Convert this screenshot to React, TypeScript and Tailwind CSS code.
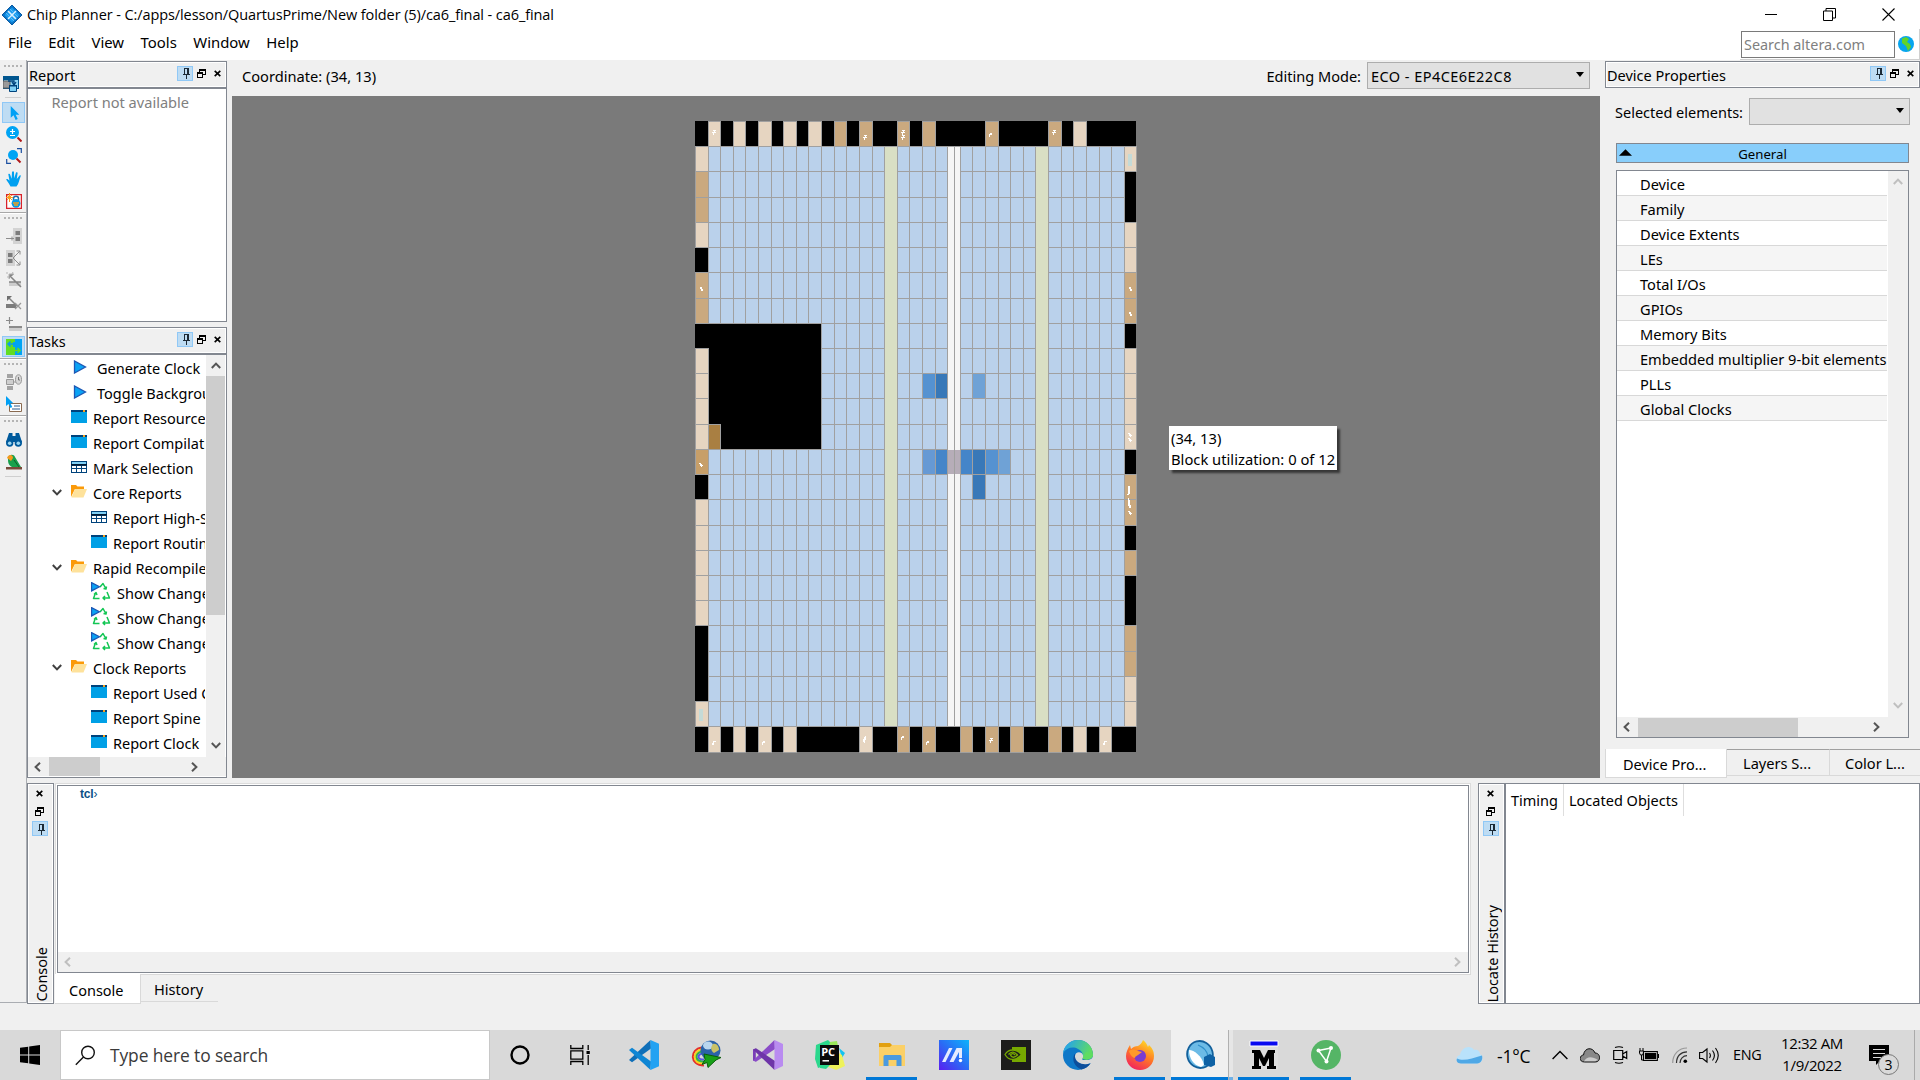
import React from "react";

type P = { children?: React.ReactNode; className?: string };

const XS = [695, 708, 720, 733, 745, 758, 771, 783, 796, 808, 821, 834, 846, 859, 872, 884, 897, 909, 922, 935, 947, 960, 972, 985, 998, 1010, 1023, 1035, 1048, 1061, 1073, 1086, 1099, 1111, 1124, 1136];
const YS = [121, 146, 171, 197, 222, 247, 272, 298, 323, 348, 373, 398, 424, 449, 474, 499, 525, 550, 575, 600, 625, 651, 676, 701, 726, 752];

const LINE = "#a0a0a0";
const L = "#e6d5c1";
const T = "#caa97f";
const BLUE = "#bad1eb";
const GREEN = "#d9dfc4";

type Cell = [number, number, string];

const pads: Cell[] = [
  ...[1, 3, 5, 7, 9, 30].map((c): Cell => [c, 0, L]),
  ...[11, 13, 16, 18, 23, 28].map((c): Cell => [c, 0, T]),
  ...[1, 3, 5, 7, 13, 30, 32].map((c): Cell => [c, 24, L]),
  ...[16, 18, 21, 23, 25, 28].map((c): Cell => [c, 24, T]),
  ...[1, 4, 9, 10, 11, 12, 15, 16, 17, 18, 19, 23].map((r): Cell => [0, r, L]),
  ...[2, 3, 6, 7].map((r): Cell => [0, r, T]),
  [0, 13, "#c79f69"],
  ...[1, 4, 5, 9, 10, 11, 12, 22, 23].map((r): Cell => [34, r, L]),
  ...[6, 7, 14, 15, 17, 20, 21].map((r): Cell => [34, r, T]),
  [1, 12, "#a97f42"],
];

const used: Cell[] = [
  [18, 10, "#5592d1"], [19, 10, "#3878b8"], [22, 10, "#6fa2d6"],
  [18, 13, "#6699d4"], [19, 13, "#4485c9"], [21, 13, "#4485c9"],
  [22, 13, "#3878b8"], [23, 13, "#5592d1"], [24, 13, "#6fa2d6"], [22, 14, "#3878b8"],
];

const SHAPES: Record<string, string[]> = {
  a: [".###", "..#.", "####", ".#..", ".#.."],
  b: [".##", "###", "#..", "#.."],
  c: ["##.", "##.", ".##", ".##"],
  d: ["##..", ".##.", ".###", "..#."],
  e: ["..#", ".##", ".##", "###", "##.", "##.", ".#."],
  f: [".###", ".#..", "##..", "##.."],
  j: [".##", ".##", ".##", ".##", ".##", ".##", ".##", ".##", "##."],
  k: [".#..", ".#..", ".##.", ".##.", ".##.", ".##.", ".##.", ".###", "..##", "..##"],
};

const marks: [string, number, number][] = [
  ["a", 712, 130], ["a", 863, 135], ["a", 901, 130], ["a", 901, 135], ["b", 989, 133], ["a", 1052, 130],
  ["c", 700, 287], ["c", 1129, 287], ["c", 1129, 312], ["d", 1128, 433], ["d", 1128, 438], ["d", 699, 463],
  ["j", 1127, 486], ["k", 1127, 498], ["d", 1128, 511],
  ["f", 712, 741], ["b", 762, 741], ["e", 863, 736], ["b", 901, 736], ["b", 926, 741], ["a", 989, 738], ["f", 1103, 741],
];

const Box = ({ cell: [c, r, fill] }: { cell: Cell }) => (
  <rect x={XS[c] + 0.5} y={YS[r] + 0.5} width={XS[c + 1] - XS[c]} height={YS[r + 1] - YS[r]} fill={fill} stroke={LINE} />
);

function ChipMap() {
  const fabric: Cell[] = [];
  for (let r = 1; r < 24; r++)
    for (let c = 1; c < 34; c++) {
      if (c === 15 || c === 20 || c === 27) continue;
      if (r >= 8 && r <= 12 && c < 10) continue;
      fabric.push([c, r, BLUE]);
    }
  return (
    <svg className="block h-[632px] w-[442px]" viewBox="695 121 442 632" shapeRendering="crispEdges">
      <rect x={695} y={121} width={441} height={631} fill="#000" />
      {fabric.map((c, i) => <Box key={i} cell={c} />)}
      {[15, 27].map((c) => (
        <rect key={c} x={XS[c] + 0.5} y={146.5} width={XS[c + 1] - XS[c]} height={580} fill={GREEN} stroke={LINE} />
      ))}
      <rect x={947.5} y={146.5} width={13} height={580} fill="#f5f5f5" stroke={LINE} />
      <rect x={948} y={450} width={12} height={24} fill="#b6adb8" />
      <rect x={954} y={147} width={1} height={579} fill={LINE} />
      {used.map((c, i) => <Box key={i} cell={c} />)}
      {pads.map((c, i) => <Box key={i} cell={c} />)}
      <rect x={1128} y={154} width={4} height={12} fill="#c4dad7" />
      <rect x={699} y={709} width={4} height={12} fill="#c4dad7" />
      {marks.map(([s, x, y], i) =>
        SHAPES[s].map((row, dy) =>
          [...row].map((ch, dx) => (ch === "#" ? <rect key={`${i}-${dy}-${dx}`} x={x + dx} y={y + dy} width={1} height={1} fill="#fff" /> : null))
        )
      )}
    </svg>
  );
}

/* ---------- small glyphs ---------- */
const Svg = ({ children, className = "size-4", vb = "0 0 16 16" }: P & { vb?: string }) => (
  <svg className={`block shrink-0 ${className}`} viewBox={vb} fill="none">{children}</svg>
);

const Pin = () => (
  <span className="flex h-[15px] w-4 items-center justify-center border border-[#90c8f6] bg-[#bedcf3]">
    <Svg className="ml-[3px] mt-px h-[11px] w-[9px]" vb="0 0 9 11">
      <path d="M2.5 .5h4v6h-4zM5.5 1v6M1 6.5h7M4.5 7v4" stroke="#1c2a36" shapeRendering="crispEdges" />
    </Svg>
  </span>
);
const Restore = () => (
  <Svg className="h-[9px] w-[9px]" vb="0 0 9 9">
    <path d="M2.5 3V.5h6v5H6M2.5 1h6M.5 3.5h5v5h-5zM.5 4h5" stroke="#000" shapeRendering="crispEdges" />
  </Svg>
);
const Cross = () => (
  <Svg className="h-[7px] w-[7px]" vb="0 0 7 7">
    <path d="M.7.8 6.3 6.2M6.3.8.7 6.2" stroke="#000" strokeWidth="1.6" />
  </Svg>
);
const DockButtons = () => (
  <div className="mb-[3px] flex items-center">
    <Pin />
    <span className="ml-1"><Restore /></span>
    <span className="ml-2"><Cross /></span>
  </div>
);
const DockTitle = ({ children }: P) => (
  <div className="flex h-[27px] shrink-0 items-center justify-between border border-[#828790] bg-[#f0f0f0] pl-px pr-[5px] shadow-[inset_1px_1px_0_#fff,inset_-1px_-1px_0_#fff]">
    <span>{children}</span>
    <DockButtons />
  </div>
);
const Chev = ({ d, c = "#555" }: { d: "u" | "d" | "l" | "r"; c?: string }) => (
  <Svg className="size-[10px]" vb="0 0 10 10">
    <path d={{ u: "M.8 7 5 2.6 9.2 7", d: "M.8 3 5 7.4 9.2 3", l: "M7 .8 2.6 5 7 9.2", r: "M3 .8 7.4 5 3 9.2" }[d]} stroke={c} strokeWidth="2" />
  </Svg>
);

const Play = () => (
  <Svg className="h-[14px] w-[14px]" vb="0 0 14 14"><path d="M1.5 1v12l11-6z" fill="#0aa3f5" stroke="#1d57b4" strokeWidth="1.3" /></Svg>
);
const Win = () => (
  <Svg className="h-[13px] w-4" vb="0 0 16 13"><path d="M0 0h16v13H0z" fill="#00a0e6" /><path d="M0 0h16v2H0z" fill="#00437c" /><path d="M12 0h2v2h-2z" fill="#f9a11b" /></Svg>
);
const Tbl = () => (
  <Svg className="h-[12px] w-4" vb="0 0 16 12">
    <path d="M0 0h16v12H0z" fill="#00437c" /><path d="M1 1h14v2H1z" fill="#7fd0f5" /><path d="M0 3h16v1.5H0z" fill="#001a33" />
    <path d="M1 5h4v2H1zM6 5h4v2H6zM11 5h4v2h-4zM1 8h4v3H1zM6 8h4v3H6zM11 8h4v3h-4z" fill="#fff" />
  </Svg>
);
const Folder = () => (
  <Svg className="h-[13px] w-4" vb="0 0 16 13"><path d="M0 0h5l1.5 1.5H13V4H4L0 12z" fill="#fb9a09" /><path d="M4 4h12l-3.5 8.5H.5z" fill="#fee29b" /></Svg>
);
const Recycle = () => (
  <Svg className="h-[19px] w-5" vb="0 0 20 19">
    <path d="M9 5l3-3.5L14.500 6M12.500 6.500l2.500.5.5-2.500M16 10l2.500 6H12M14 14l-2 2 2 2M8.500 16.500H2.500l2-5.500M3 12.500l2-2 1 2.500" stroke="#12c653" strokeWidth="1.5" strokeLinejoin="round" />
    <path d="M.6.6v8.300L8.500 4.800z" fill="#0aa3f5" stroke="#1d57b4" strokeWidth="1.200" />
  </Svg>
);

/* ---------- left tool strip ---------- */
const Tool = ({ children, on }: P & { on?: boolean }) => (
  <div className="flex h-[22.2px] shrink-0 items-center pl-0.5">
    <span className={`flex h-[21px] w-[23px] items-center justify-center ${on ? "border border-[#90c8f6] bg-[#bedcf3]" : ""}`}>{children}</span>
  </div>
);
const Grip = () => (
  <div className="flex h-[11px] shrink-0 items-start gap-0.5 pl-1 pt-[3px]">
    {[0, 1, 2, 3, 4].map((i) => <i key={i} className="size-0.5 bg-[#b4b4b4]" />)}
  </div>
);
const Sep = () => <div className="h-0.5 shrink-0 border-t border-[#a8a8a8] bg-white" />;

function ToolStrip() {
  return (
    <aside className="flex w-[27px] shrink-0 flex-col border-b border-r border-[#aaadb2]">
      <div className="h-0.5 shrink-0" />
      <Grip />
      <div className="mt-[-2px] flex h-[25px] shrink-0 items-center pl-[3px]">
        <Svg>
          <path d="M0 0h16v13H0z" fill="#00568f" /><path d="M1 4h14v8H1z" fill="#8ed4f3" /><path d="M0 5h7v7H0z" fill="#9a9a9a" stroke="#5d5d5d" />
          <path d="M5 5h6v3M9 6l2 3 2-3" stroke="#00437c" strokeWidth="1.300" /><path d="M6.500 9.500h7v6h-7z" fill="#7fd0f5" stroke="#00437c" /><path d="M6 9h8v1.500H6z" fill="#00437c" />
        </Svg>
      </div>
      <div className="mx-[5px] mb-[3px] mt-px h-px shrink-0 bg-[#cfcfcf]" />
      <Tool on><Svg className="h-[15px] w-4"><path d="M4.500 1v12.500l3-2.500 2.200 5 2.300-1-2.200-4.700h3.900z" fill="#00a0f5" /></Svg></Tool>
      <Tool><Svg><circle cx="6.500" cy="6.500" r="6.500" fill="#00a4f4" /><path d="M4 5.500h5M6.500 3v5M4 9.500h5" stroke="#fff" strokeWidth="1.200" /><path d="m11.500 11.500 4 4" stroke="#b01818" strokeWidth="2" /></Svg></Tool>
      <Tool><Svg><circle cx="7" cy="7" r="5" fill="#00a4f4" /><path d="m10.500 10.500 4 4" stroke="#b01818" strokeWidth="2" /><path d="M11 .7h4.300V5M.7 11v4.300H5" stroke="#1b4fa0" strokeWidth="1.200" /></Svg></Tool>
      <Tool><Svg><path d="M4.500 15.500C3 12 .8 10 .2 8.200c.8-.6 2 0 3.300 1.500L2.300 3.200c.9-.7 1.600-.3 1.900.6l1.400 4L6 1c.7-1 1.800-.8 2 .2l.2 6L10 1.500c.8-.7 1.700-.3 1.600.8L10.800 8l2.800-3.600c.9-.3 1.500.3 1 1.200C13 9 13 13 10.500 15.500z" fill="#00a0f0" /></Svg></Tool>
      <Tool><Svg><path d="M.6 1.600h14.800v13.800H.6z" fill="#fff" stroke="#d8222b" strokeWidth="1.300" /><path d="M7.500 7V5.500c0-3 5-3 5 0V7" stroke="#1c6fae" strokeWidth="1.500" /><circle cx="10" cy="10.300" r="4.400" fill="#0a9be8" /><path d="M7 10h6M8 12h4" stroke="#f6a21b" strokeWidth="1.300" /><path d="M3.500 0v9M0 4.500h7M1 2l5 5M6 2 1 7" stroke="#f9a11b" /></Svg></Tool>
      <Sep /><Grip />
      <Tool><Svg><path d="M7 0h9v16H7z" fill="#d3d3d3" /><path d="M9.500 3h4.500v4H9.500zM9.500 9h4.500v4H9.500z" fill="#7c7c7c" /><path d="M0 10.500h8M6 8.500v4" stroke="#8c8c8c" /></Svg></Tool>
      <Tool><Svg><path d="M0 0h9v16H0z" fill="#d3d3d3" /><path d="M2 3h4.500v4H2zM2 9h4.500v4H2z" fill="#7c7c7c" /><path d="M7 8l7-7M7 8l7 7M10.500 1H14v3.500M10.500 15H14v-3.500" stroke="#8c8c8c" /></Svg></Tool>
      <Tool><Svg><path d="M3 10h12v4H3z" fill="#cdcdcd" /><path d="M3 10h12M4 4l11 11" stroke="#858585" strokeWidth="1.500" /><path d="M3 2h5L3 7zM0 1h2M1 5h2M7 0l-1 2" fill="#858585" stroke="#b5b5b5" /></Svg></Tool>
      <Tool><Svg><path d="M0 9h10v4H0z" fill="#7c7c7c" /><path d="M2 2l9 9" stroke="#858585" strokeWidth="1.500" /><path d="M1 1h5L1 6z" fill="#6f6f6f" /><path d="m9 8 6 6m0-6-6 6" stroke="#999" strokeWidth="1.300" /></Svg></Tool>
      <Tool><Svg><path d="M0 3.500h7M3.500 0v7" stroke="#8a8a8a" strokeWidth="1.200" /><path d="M3 9h13v5H3z" fill="#cdcdcd" /><path d="M3 9h13v2H3z" fill="#8a8a8a" /></Svg></Tool>
      <Tool on><Svg><path d="M0 0h16v16H0z" fill="#62dd22" /><path d="M9 0h7v16H9V8H7V3h2z" fill="#00a4f4" /><path d="M2 5h7M4.500 2.500 2 5l2.500 2.500" stroke="#0a9be8" strokeWidth="1.500" /><path d="M7 11.500h7M11.500 9l2.500 2.500L11.500 14" stroke="#62dd22" strokeWidth="1.500" /></Svg></Tool>
      <Sep /><Grip />
      <Tool><Svg><path d="M1 0h6v4H1zM1 12h6v4H1z" fill="#a3a3a3" /><path d="M.5 5.500h7v5h-7z" fill="#cfcfcf" stroke="#999" /><path d="M8 8h3" stroke="#999" /><ellipse cx="12.500" cy="5.500" rx="3" ry="4.700" fill="#d8d8d8" stroke="#999" /><path d="M12.500 3v3h1.500" stroke="#777" /></Svg></Tool>
      <Tool><Svg><path d="M3.500 7.500h12v8h-12z" fill="#fff" stroke="#8a6a50" /><path d="M8 10h6M6 13h8" stroke="#2a5a8c" /><path d="M0 0v10l2.500-2 2 4 1.800-1-2-3.700h3z" fill="#00a0f5" /></Svg></Tool>
      <Sep /><Grip />
      <Tool><Svg><path d="M3 1h3.500v3h3V1H13l3 9H0z" fill="#005a9c" /><circle cx="3.700" cy="11" r="3.700" fill="#005a9c" /><circle cx="12.300" cy="11" r="3.700" fill="#005a9c" /><circle cx="3.700" cy="11.300" r="1.800" fill="#9bd6f2" /><circle cx="12.300" cy="11.300" r="1.800" fill="#9bd6f2" /></Svg></Tool>
      <Tool><Svg><path d="M0 13h16v2.500H0z" fill="#7a4a3a" /><path d="M2 4c1-4 6-4 7-1l6 10H6C2 11 2 8 2 4z" fill="#18a14b" /><path d="M1 4c1-4 6-4 6 0l-2 3z" fill="#f39a1e" /><path d="M8 6l5 7" stroke="#0c5e2a" /></Svg></Tool>
      <div className="mx-[5px] mt-[3px] h-px shrink-0 bg-[#cfcfcf]" />
    </aside>
  );
}

/* ---------- tasks ---------- */
type Task = { k: "play" | "win" | "tbl" | "dir" | "cyc"; t: string; sub?: boolean };
const tasks: Task[] = [
  { k: "play", t: "Generate Clock" }, { k: "play", t: "Toggle Background" },
  { k: "win", t: "Report Resource" }, { k: "win", t: "Report Compilation" }, { k: "tbl", t: "Mark Selection" },
  { k: "dir", t: "Core Reports" }, { k: "tbl", t: "Report High-Speed", sub: true }, { k: "win", t: "Report Routing", sub: true },
  { k: "dir", t: "Rapid Recompile" }, { k: "cyc", t: "Show Changes" }, { k: "cyc", t: "Show Changes" }, { k: "cyc", t: "Show Changes" },
  { k: "dir", t: "Clock Reports" }, { k: "win", t: "Report Used Clock", sub: true }, { k: "win", t: "Report Spine", sub: true }, { k: "win", t: "Report Clock", sub: true },
];

function TaskRow({ task }: { task: Task }) {
  const { k, t, sub } = task;
  const pad = k === "play" ? "pl-[45px]" : k === "dir" ? "pl-[24px]" : k === "cyc" || sub ? "pl-[63px]" : "pl-[43px]";
  const gap = k === "play" ? "ml-[10px]" : "ml-1.5";
  return (
    <div className={`flex h-[25px] shrink-0 items-center whitespace-nowrap ${pad}`}>
      {k === "dir" && <span className="mb-[3px] mr-[9px]"><Chev d="d" c="#404040" /></span>}
      <span className="mb-[4px]">
        {k === "play" ? <Play /> : k === "win" ? <Win /> : k === "tbl" ? <Tbl /> : k === "dir" ? <Folder /> : <Recycle />}
      </span>
      <span className={`${gap} mt-[-1px]`}>{t}</span>
    </div>
  );
}

function LeftDocks() {
  return (
    <div className="flex w-[200px] shrink-0 flex-col pt-px">
      <section className="flex h-[261px] shrink-0 flex-col">
        <DockTitle>Report</DockTitle>
        <div className="flex-1 border border-[#828790] bg-white pl-[23.5px] pt-[3px] text-[14.6px] text-[#808080]">Report not available</div>
      </section>
      <section className="mt-[5px] flex h-[451px] shrink-0 flex-col">
        <DockTitle>Tasks</DockTitle>
        <div className="flex min-h-0 flex-1 flex-col border border-[#828790] bg-white">
          <div className="flex h-[402px] shrink-0">
            <div className="mr-px min-w-0 flex-1 overflow-hidden pt-px">{tasks.map((t, i) => <TaskRow key={i} task={t} />)}</div>
            <div className="mr-px flex w-[19px] shrink-0 flex-col items-center bg-[#f0f0f0]">
              <span className="flex h-[21px] items-center"><Chev d="u" /></span>
              <i className="h-[239px] w-full bg-[#cdcdcd]" />
              <span className="mb-[7px] mt-auto"><Chev d="d" /></span>
            </div>
          </div>
          <div className="mb-px flex flex-1 items-center bg-[#f0f0f0] pl-[5px]">
            <Chev d="l" />
            <i className="ml-[6px] h-[19px] w-[51px] bg-[#cdcdcd]" />
            <span className="ml-auto mr-[27px]"><Chev d="r" /></span>
          </div>
        </div>
      </section>
    </div>
  );
}

const Combo = ({ children, className = "" }: P) => (
  <div className={`flex items-center justify-between border border-[#adadad] bg-[#e1e1e1] pl-[3px] pr-[5px] ${className}`}>
    <span>{children}</span>
    <Svg className="mb-0.5 h-[5px] w-[8px]" vb="0 0 8 5"><path d="M0 0h8L4 5z" fill="#000" /></Svg>
  </div>
);

function Center() {
  return (
    <main className="ml-[5px] flex w-[1368px] shrink-0 flex-col">
      <div className="flex h-9 items-center pl-[10px]">
        <span className="mt-[-4px] text-[14.65px]">Coordinate: (34, 13)</span>
        <span className="ml-auto mr-1.5 mt-[-4px] text-[14.55px]">Editing Mode:</span>
        <Combo className="mr-[10px] mt-[-5px] h-[27px] w-[223px] tracking-[0.45px]">ECO - EP4CE6E22C8</Combo>
      </div>
      <div className="relative h-[682px] bg-[#7a7a7a] pl-[463px] pt-[25px]">
        <ChipMap />
        <div className="absolute left-[937px] top-[330px] h-[44px] w-[168px] whitespace-nowrap bg-white pl-0.5 pt-[2px] text-[14.75px] leading-[21px] shadow-[3px_3px_2px_rgba(0,0,0,0.55)]">
          (34, 13)<br />Block utilization: 0 of 12
        </div>
      </div>
    </main>
  );
}

const props = ["Device", "Family", "Device Extents", "LEs", "Total I/Os", "GPIOs", "Memory Bits", "Embedded multiplier 9-bit elements", "PLLs", "Global Clocks"];

function RightDock() {
  return (
    <div className="ml-[5px] flex w-[315px] shrink-0 flex-col pt-px">
      <DockTitle>Device Properties</DockTitle>
      <div className="mt-[10px] flex h-[27px] items-center justify-between pl-[10px] pr-[10px]">
        <span>Selected elements:</span>
        <Combo className="h-[27px] w-[161px]" />
      </div>
      <div className="relative ml-[11px] mt-[18px] flex h-5 w-[293px] items-center justify-center border border-[#828790] bg-[#88cefb] pt-[2px] text-[13.2px]">
        General
        <Svg className="absolute left-0.5 top-[5px] h-[7px] w-[13px]" vb="0 0 14 7"><path d="M0 7h14L7 0z" fill="#000" /></Svg>
      </div>
      <div className="ml-[11px] mt-[7px] flex h-[568px] w-[293px] flex-col border border-[#828790] bg-white">
        <div className="flex flex-1">
          <div className="w-[270px] overflow-hidden">
            {props.map((p, i) => (
              <div key={p} className={`flex h-[25px] items-center whitespace-nowrap border-b border-[#d8d8d8] pl-[23px] pt-px text-[14.62px] ${i % 2 ? "bg-[#f5f5f5]" : "bg-white"}`}>{p}</div>
            ))}
          </div>
          <div className="ml-px flex flex-1 flex-col items-center justify-between bg-[#f0f0f0] pb-[7px] pt-[6px]"><Chev d="u" c="#bfbfbf" /><Chev d="d" c="#bfbfbf" /></div>
        </div>
        <div className="flex h-5 items-center bg-[#f0f0f0] pl-[5px]">
          <Chev d="l" />
          <i className="ml-[6px] h-[19px] w-[160px] bg-[#cdcdcd]" />
          <span className="ml-auto mr-[27px]"><Chev d="r" /></span>
        </div>
      </div>
      <div className="mt-[11px] flex h-[29px] items-start whitespace-nowrap">
        <div className="flex h-[29px] w-[122px] items-center border border-t-0 border-[#d9d9d9] bg-white pl-[17px] pt-px">Device Pro...</div>
        <div className="flex h-[27px] w-[103px] items-center border-b border-r border-t border-[#d9d9d9] border-t-[#a0a0a0] pl-4 pt-px text-[14.6px]">Layers S...</div>
        <div className="flex h-[27px] flex-1 items-center border-b border-t border-[#d9d9d9] border-t-[#a0a0a0] pl-[15px] pt-px text-[14.6px]">Color L...</div>
      </div>
    </div>
  );
}

const SideTitle = ({ children }: P) => (
  <div className="flex h-[221px] w-[27px] shrink-0 flex-col items-center border border-[#828790] pt-[6px] shadow-[inset_1px_1px_0_#fff,inset_-1px_-1px_0_#fff]">
    <span className="mr-[2px] flex h-[7px] items-center"><Cross /></span>
    <span className="mr-[2px] mt-[10px]"><Restore /></span>
    <span className="mr-px mt-[5px]"><Pin /></span>
    <span className="mb-px ml-0 mt-auto rotate-180 whitespace-nowrap leading-[20px] [writing-mode:vertical-rl]">{children}</span>
  </div>
);

function Bottom() {
  return (
    <div className="mt-[5px] flex h-[221px]">
      <SideTitle>Console</SideTitle>
      <div className="ml-px flex w-[1416px] flex-col">
        <div className="h-[191px] border border-b-0 border-[#dcdcdc] bg-white p-px">
          <div className="flex h-[188px] flex-col justify-between border border-[#828790]">
            <div className="pl-[22px] font-['Liberation_Sans'] text-[12px] font-bold leading-[16px] tracking-[-0.2px] text-[#0b4f86]">tcl<span className="font-normal">›</span></div>
            <div className="flex h-5 items-center justify-between bg-[#f0f0f0] pl-[5px] pr-[6px]"><Chev d="l" c="#bfbfbf" /><Chev d="r" c="#bfbfbf" /></div>
          </div>
        </div>
        <div className="flex h-[30px]">
          <div className="flex h-[30px] w-[85px] items-center border-b border-[#d9d9d9] bg-white pl-[14px] pt-[3px]">Console</div>
          <div className="flex flex-1 border-l border-t border-[#d9d9d9]">
            <div className="flex h-[27px] w-[77px] items-center border-b border-[#d9d9d9] pl-[13px] pt-[2px] text-[14.6px]">History</div>
          </div>
        </div>
      </div>
      <div className="ml-[7px]"><SideTitle>Locate History</SideTitle></div>
      <div className="flex h-[221px] flex-1 items-start whitespace-nowrap border border-[#828790] bg-white">
        <div className="flex h-8 w-[58px] items-center border-r border-[#dedede] pl-[5px]">Timing</div>
        <div className="flex h-8 w-[120px] items-center border-r border-[#dedede] pl-[5px]">Located Objects</div>
      </div>
    </div>
  );
}

/* ---------- taskbar ---------- */
const App30 = ({ children, line, on, className = "" }: P & { line?: boolean; on?: boolean }) => (
  <div className={`flex h-[50px] shrink-0 flex-col items-center ${on ? "bg-[#f0f0f0]" : ""} ${className || "w-[51px]"}`}>
    <span className="mt-[10px] flex h-[30px] items-center">{children}</span>
    {line && <i className="mt-auto h-[3px] w-full bg-[#0078d7]" />}
  </div>
);
const Big = ({ children }: P) => <Svg className="size-[30px]" vb="0 0 30 30">{children}</Svg>;

function Taskbar() {
  return (
    <footer className="flex h-[50px] bg-[#d9d9d9] font-['Open_Sans',sans-serif]">
      <div className="flex w-[60px] items-center pl-5">
        <Svg className="size-5" vb="0 0 20 20"><path d="M0 2.800 8.200 1.700v7.800H0zM9.200 1.500 20 0v9.500H9.200zM0 10.500h8.200v7.800L0 17.200zM9.200 10.500H20V20L9.200 18.500z" fill="#000" /></Svg>
      </div>
      <div className="flex w-[430px] items-center border border-[#c8c8c8] bg-white pl-[14px]">
        <Svg className="size-[21px]" vb="0 0 21 21"><circle cx="13" cy="7.500" r="6.300" stroke="#111" strokeWidth="1.400" /><path d="M8.500 12 .8 19.800" stroke="#111" strokeWidth="1.400" /></Svg>
        <span className="ml-[14px] mt-[-1px] text-[17.4px] tracking-[-0.1px] text-[#3a3a3a]">Type here to search</span>
      </div>
      <App30 className="ml-[4px] w-[51px]"><Svg className="size-5" vb="0 0 20 20"><circle cx="10" cy="10" r="8.500" stroke="#000" strokeWidth="2.400" /></Svg></App30>
      <App30 className="ml-[9px] w-[51px]"><Svg className="size-5" vb="0 0 20 20"><path d="M.8 0v3.500h12V0M.8 20v-3.500h12V20M.8 5.800h12v8.400H.8zM18.200 0v5M18.200 10v10" stroke="#000" strokeWidth="1.300" /><path d="M16.500 6h3.300v3h-3.300z" fill="#000" /></Svg></App30>
      <App30 className="ml-[13px] w-[51px]">
        <Big><path d="M21.500 0 22 8.500 3 22.300 0 20z" fill="#0f6fb8" /><path d="M21.500 30 22 21.500 3 7.700 0 10z" fill="#0f86d4" /><path d="M21.500 0 30 3.800v22.400L21.500 30z" fill="#23a2f2" /></Big>
      </App30>
      <App30 className="ml-[11px] w-[51px]">
        <Big>
          <path d="M10.500 7.500C-1 9-2 25 13 25.500" stroke="#e5302a" strokeWidth="2" />
          <path d="M10.500 9.500C2 11-0 23 13 23.500" stroke="#f7d51d" strokeWidth="2" />
          <path d="M10.500 11.500C4 13 3 21.500 13 21.500" stroke="#31b44a" strokeWidth="2" />
          <path d="M11 13.500C6 15 6 19.500 13 19.500" stroke="#5a5ae0" strokeWidth="2" />
          <circle cx="19.500" cy="10.500" r="10" fill="#2b62a8" /><ellipse cx="17" cy="5.500" rx="5" ry="4" fill="#b9d6ee" /><path d="M22 4c4-1 6 3 6 6l-5 3c-3-2-4-5-1-9z" fill="#c9c267" />
          <path d="M13 14l17 3.500-5 2.500-8 7.500-1-5-5 2 3-5z" fill="#18a018" stroke="#0b5d0b" />
        </Big>
      </App30>
      <App30 className="ml-[11px] w-[51px]">
        <Big><path d="M0 9.500 2.800 8.500v13L0 20.500z" fill="#7a3db8" /><path d="M21.500 0 22 9 3 21.800 0 20.500z" fill="#8a4cc8" /><path d="M21.500 30 22 21 3 8.200 0 9.500z" fill="#6e35a8" /><path d="M21.500 0 30 4v22l-8.500 4z" fill="#b98bf0" /></Big>
      </App30>
      <App30 className="ml-[11px] w-[51px]">
        <Big><path d="M1 5 13 0l4 4-8 22-6 2-3-9z" fill="#2bd88d" /><path d="M15 2l7-1 1 5h-9z" fill="#9be85a" /><path d="M24 8l6 5-3 5z" fill="#14c3f0" /><path d="M22 12l5 3 3 11-9 4-10-4z" fill="#eef25a" /><path d="M5 28l6 1 4-4H5z" fill="#2bd88d" /><path d="M5 5h19v20H5z" fill="#0a0a0a" /><text x="6.200" y="16" fill="#fff" fontSize="11" fontWeight="700" fontFamily="Open Sans">PC</text><path d="M7.500 20.800h6.500" stroke="#fff" strokeWidth="1.500" /></Big>
      </App30>
      <App30 line className="ml-[11px] w-[51px]">
        <Big><path d="M2 5h26v21H2z" fill="#fbd067" /><path d="M2 3h11l2 2-2 2H2z" fill="#e2a010" /><path d="M6.500 26V16.500q0-1.500 1.500-1.500h15q1.500 0 1.500 1.500V26h-5v-6h-8v6z" fill="#4b9ae0" /></Big>
      </App30>
      <App30 className="ml-[11px] w-[51px]">
        <Big><defs><linearGradient id="ga" x1="0" y1="1" x2="1" y2="0"><stop offset="0" stopColor="#5a1ef0" /><stop offset=".5" stopColor="#2a6cf5" /><stop offset="1" stopColor="#0bb4fb" /></linearGradient></defs><path d="M0 0h30v30H0z" fill="url(#ga)" /><path d="M3 22 10 8h3.500l-7 14zM10.500 22l7-14H23v10h-3v-6l-5.500 10z" fill="#e4ebff" /><circle cx="21.500" cy="20.500" r="1.700" fill="#fff" /></Big>
      </App30>
      <App30 className="ml-[11px] w-[51px]">
        <Big><path d="M0 0h30v30H0z" fill="#1d1d1b" /><path d="M11 7h14v15H11z" fill="#77a900" /><path d="M4 14.500c4-6.500 12-5.500 16.500 0-4.500 6-12.500 7-16.500 0z" fill="#1d1d1b" stroke="#77a900" strokeWidth="1.300" /><path d="M7.500 14.500c3-3.500 6-3 9 .5-3 3-6 3-7 0 1.500-2 3-1.500 4.500 0" stroke="#77a900" strokeWidth="1.300" /></Big>
      </App30>
      <App30 className="ml-[11px] w-[51px]">
        <Big>
          <defs><linearGradient id="gb" x1="0" y1="0" x2="1" y2=".3"><stop offset=".2" stopColor="#2aa8e0" /><stop offset="1" stopColor="#5fdc62" /></linearGradient></defs>
          <circle cx="15" cy="15" r="15" fill="#0f78c8" />
          <path d="M30 14.500C30 6 23 0 15 0 7 0 1 6 0 13c3-5 10-7 15-4 4 2 6 5 4.500 10 6 1.500 10.500-.5 10.500-4.500z" fill="url(#gb)" />
          <path d="M11.500 14c-3 6 0 13 7 15.500 4-1 7-3 9-6-7 2-15-.5-14.500-8.500z" fill="#0c4e9c" />
          <path d="M30 16.500c-1 3-5 4-9 3.500-1.500 0-2-.5-1.500-1.500 1-1.500 1-4-1-5.500-3-2-7 0-6.500 4C13 23 21 26 27.500 23l3 1V16z" fill="#d9d9d9" />
          <path d="M30 14.500c0 4-4.500 6-9 4.800-1.200-.4-1.500-.8-1-1.800L23 12z" fill="#5fdc62" />
        </Big>
      </App30>
      <App30 line className="ml-[11px] w-[51px]">
        <Big><defs><linearGradient id="gc" x1=".8" y1="0" x2=".3" y2="1"><stop offset="0" stopColor="#ffe226" /><stop offset=".5" stopColor="#ff7a25" /><stop offset="1" stopColor="#f2225e" /></linearGradient></defs><path d="M18 0c3 2 4 5 5 7l1-2c4 4 5 7 5 11 0 8-6 14-14 14S1 24 1 16C1 12 3 8 5 5l1 4c2-2 4-3 7-3 2-1 4-3 5-6z" fill="url(#gc)" /><circle cx="15" cy="16" r="6" fill="#7a3ccf" /><path d="M4 11c4-3 7-1 9 0l4 1-4 3c-1 1-3 1-3 3-2 0-5-3-6-7z" fill="#ff9a2b" /></Big>
      </App30>
      <App30 line on className="ml-[6px] w-[57px]">
        <Big><ellipse cx="15" cy="14.500" rx="12.800" ry="13.500" fill="#6cbbe6" stroke="#13609b" strokeWidth="1.800" transform="rotate(-15 15 14.500)" /><path d="M4 10c5 0 13 6 15 15l-3 2C8 25 4 18 4 10z" fill="#fff" /><path d="M13 5c5 2 9 6 10 11" stroke="#2f8fc9" strokeWidth="1.300" /><path d="m19 17 6-3 5 3v8l-4 2-7-2z" fill="#0f62a5" /></Big>
      </App30>
      <div className="flex h-[50px] w-[5px] flex-col border-l border-[#b0b0b0] bg-[#e6e6e6]"><i className="mt-auto h-[3px] bg-[#6fb0e6]" /></div>
      <App30 line className="ml-[5px] w-[51px]">
        <Big><path d="M1 0h28v30H1z" fill="#dedede" /><path d="M1 1h28v5H1z" fill="#0a0af0" stroke="#fff" /><path d="M3 10h8l4 8 4-8h7v3h-1v13h2v3h-9v-3h2v-8l-4 8h-2l-4-8v8h2v3H3v-3h2V13H3z" fill="#000" /></Big>
      </App30>
      <App30 line className="ml-[11px] w-[51px]">
        <Big><circle cx="15" cy="15" r="15" fill="#55b566" /><path d="M7.500 10.500 20 8l-4.500 13.500z" stroke="#fff" strokeWidth="1.500" /><circle cx="7.500" cy="10.500" r="2" fill="#fff" /><circle cx="20" cy="8" r="2" fill="#fff" /><circle cx="15.500" cy="21.500" r="2" fill="#fff" /></Big>
      </App30>
      <div className="ml-[105px] flex items-center text-black">
        <Svg className="h-[18px] w-[27px]" vb="0 0 27 18"><path d="M6 17.500C-1 17.500-1 10 4 9 5 2 14-2 18 4c4-1 6 2 6 4 4 2 3 9-2 9.500z" fill="#b9e2fb" /><path d="M5 17.500c-4 0-5-3-4-5 6 3 15 0 25-3 1 4-1 8-5 8z" fill="#4fa8e6" /></Svg>
        <span className="ml-[13px] mt-0.5 w-[56px] pl-px text-[17.500px] tracking-[-0.2px]">-1°C</span>
        <Svg className="h-[10px] w-4" vb="0 0 16 10"><path d="M.6 9 8 1.500 15.400 9" stroke="#000" strokeWidth="1.400" /></Svg>
        <Svg className="ml-3 h-[15px] w-5" vb="0 0 20 15"><path d="M4.500 14C-1.500 14-.5 7 3.500 7 4.500-1 13-1 15 5c6 0 6 9 .5 9z" fill="#888" stroke="#111" /><path d="M4 13.300C7 8 12 8 18 12l-3 1.300z" fill="#ccc" /></Svg>
        <Svg className="ml-[13px] h-[18px] w-[15px]" vb="0 0 15 18"><path d="M.7 4.500h9v9h-9zM9.700 8l4-2.500v7l-4-2.500M2 1.500q4-1.500 8 0M2 16.500q4 1.500 8 0" stroke="#000" strokeWidth="1.200" /></Svg>
        <Svg className="ml-[11px] h-[14px] w-5" vb="0 0 20 14"><path d="M4.500 3.500h13.800v9H4.500z" stroke="#000" strokeWidth="1.200" /><path d="M6 4.800h11v6.400H6z" fill="#000" /><path d="M19.500 6v4M1 0v3M4 0v3M2.500 7v5h2M.5 3h4v2l-1 2h-2l-1-2z" stroke="#000" /></Svg>
        <Svg className="ml-[13px] h-[17px] w-4" vb="0 0 16 17"><path d="M.7 16C.7 7 7 1 15 1" stroke="#999" strokeWidth="1.200" /><path d="M4.500 16C4.500 9 9 4.800 15 4.800M8 16c0-4 3-7.300 7-7.300" stroke="#333" strokeWidth="1.200" /><circle cx="13.300" cy="14.200" r="1.800" fill="#000" /></Svg>
        <Svg className="ml-[11px] h-[17px] w-5" vb="0 0 20 17"><path d="M.6 5.500h3L8 2v13l-4.400-3.500h-3zM10.500 6q1.800 2.500 0 5M13.500 3.500q3.800 5 0 10M16.500 1q5.500 7.500 0 15" stroke="#000" strokeWidth="1.100" /></Svg>
        <span className="ml-[14px] w-[37px] text-[14.4px] tracking-[-0.3px]">ENG</span>
        <div className="mt-[-2px] w-[84px] text-center text-[15px] leading-[22px] tracking-[-0.4px]">12:32 AM<br />1/9/2022</div>
        <div className="relative ml-[15px] mt-[10px] h-[32px] w-[28px]">
          <Svg className="h-[32px] w-[30px]" vb="0 0 30 32"><path d="M0 1h20v16h-9l-4 4v-4H0z" fill="#000" /><path d="M4 5.500h12M4 9.500h12M4 13.500h8" stroke="#d9d9d9" strokeWidth="1.200" /><circle cx="19.500" cy="20.500" r="10" fill="#d9d9d9" stroke="#777" /></Svg>
          <span className="absolute left-[15.500px] top-[11px] text-[14px] leading-[20px]">3</span>
        </div>
      </div>
      <i className="ml-auto w-[6px] border-l border-[#aaa]" />
    </footer>
  );
}

export default function App() {
  return (
    <div className="flex h-[1080px] w-[1920px] flex-col overflow-hidden bg-[#f0f0f0] font-['Noto_Sans',sans-serif] text-[14.5px] leading-[20px] text-black">
      <header className="flex h-[60px] bg-white">
        <div className="flex flex-1 flex-col">
          <div className="flex h-[29px] items-center pl-0.5 font-['Open_Sans',sans-serif] text-[14.5px] tracking-[-0.09px]">
            <Svg className="size-5" vb="0 0 20 20"><path d="M10 0 20 10 10 20 0 10z" fill="#0a76c8" stroke="#0b5aa3" /><path d="M10 2.500 17.500 10 10 17.500 2.500 10z" fill="#1c9df0" /><path d="M6 6l8 8M14 6l-8 8" stroke="#d8f0ff" strokeWidth="1.600" /><path d="M8 4l8 8M4 8l8 8" stroke="#6cc4f7" strokeWidth=".8" /></Svg>
            <span className="ml-[5px]">Chip Planner - C:/apps/lesson/QuartusPrime/New folder (5)/ca6_final - ca6_final</span>
          </div>
          <nav className="mt-[-1px] flex h-[28px] items-center gap-[16.5px] pl-2 text-[14.9px]">
            {["File", "Edit", "View", "Tools", "Window", "Help"].map((m) => <span key={m}>{m}</span>)}
          </nav>
        </div>
        <div className="flex w-[180px] flex-col">
          <div className="flex h-[29px] items-center pl-[25px]">
            <Svg className="h-3 w-3" vb="0 0 12 12"><path d="M0 5.500h12" stroke="#000" shapeRendering="crispEdges" /></Svg>
            <Svg className="ml-[46px] size-[13px]" vb="0 0 13 13"><path d="M.5 3h9v9.500h-9zM3 3V.5h9.500v9.500H10" stroke="#000" /></Svg>
            <Svg className="ml-[46px] size-[13px]" vb="0 0 13 13"><path d="M.5.5l12 12M12.500.5l-12 12" stroke="#000" strokeWidth="1.100" /></Svg>
          </div>
          <div className="flex h-[31px] items-center border-b border-r border-[#d0d0d0]">
            <div className="ml-px mt-px flex h-[27px] w-[154px] items-center border border-[#7a7a7a] bg-white pl-0.5 pt-px text-[14.4px] text-[#808080]">Search altera.com</div>
            <Svg className="ml-[3px] size-4"><circle cx="8" cy="8" r="8" fill="#07a5ee" /><path d="M4 2.500 8 1l3 2-2 3 3 2 1 3-3 4-2-5-4-3z" fill="#62d32a" /></Svg>
          </div>
        </div>
      </header>
      <div className="flex h-[943px]">
        <ToolStrip />
        <div className="flex flex-1 flex-col">
          <div className="flex h-[718px]">
            <LeftDocks />
            <Center />
            <RightDock />
          </div>
          <Bottom />
        </div>
      </div>
      <div className="h-[27px]" />
      <Taskbar />
    </div>
  );
}
